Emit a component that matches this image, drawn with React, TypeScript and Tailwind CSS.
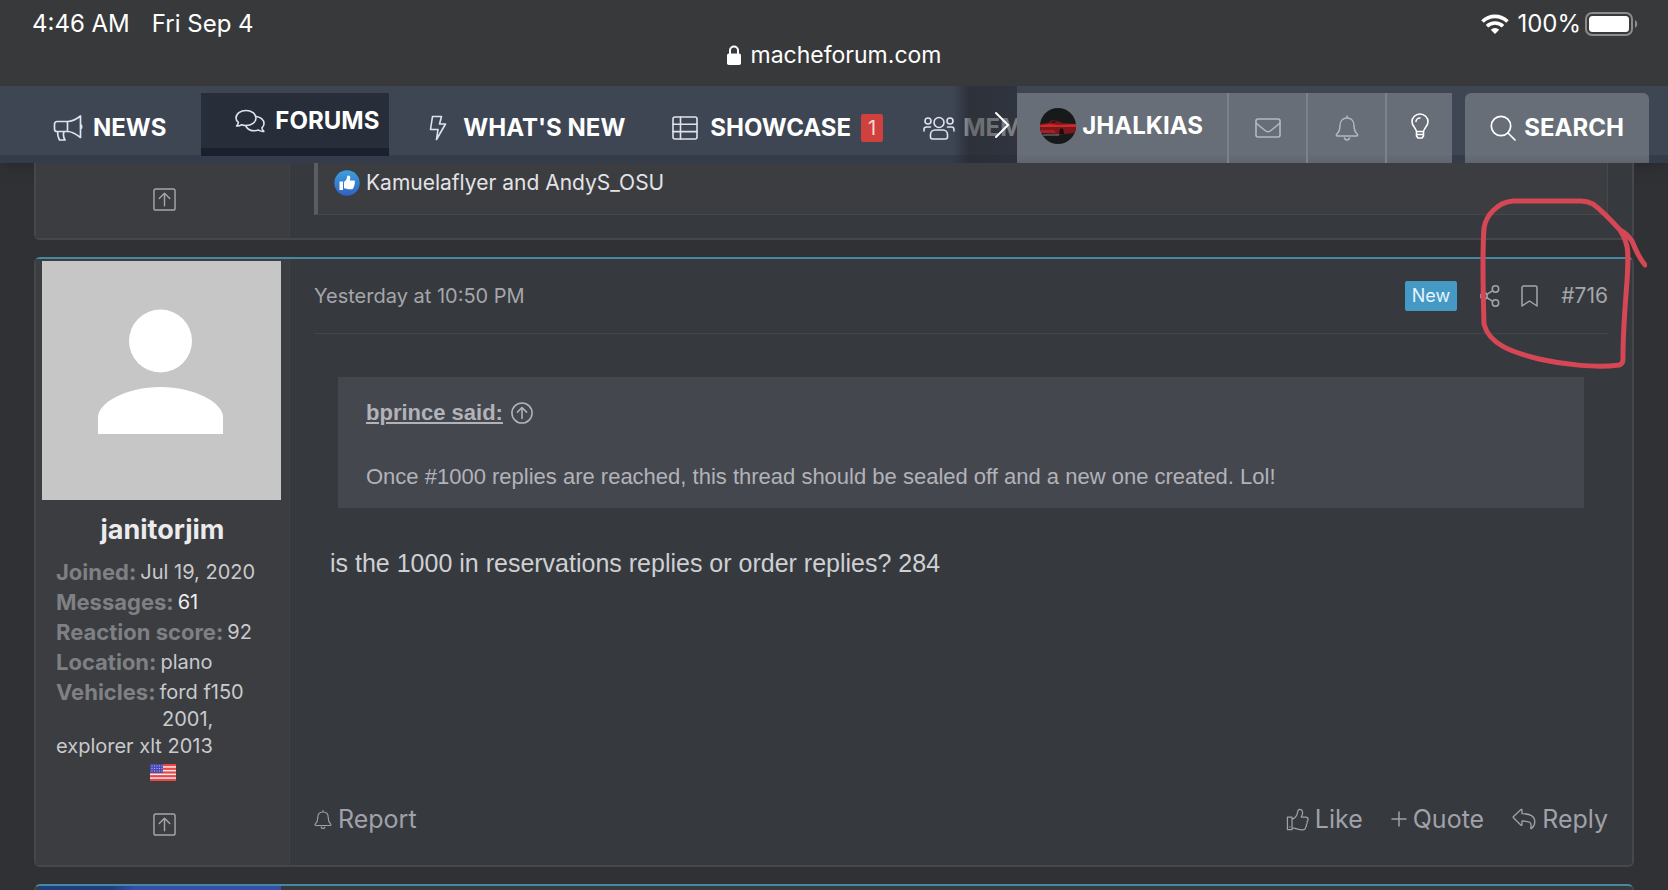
import type { ReactNode } from 'react';

type IconProps = { className?: string };

function Icon({ className, box = '0 0 24 24', sw = 1.5, children }: IconProps & { box?: string; sw?: number; children: ReactNode }) {
  return (
    <svg viewBox={box} className={className} fill="none" stroke="currentColor" strokeWidth={sw} strokeLinecap="round" strokeLinejoin="round" aria-hidden="true">
      {children}
    </svg>
  );
}

const Megaphone = (p: IconProps) => (
  <Icon {...p} box="0 0 30 26" sw={1.7}>
    <path d="M14.500 6.500H4A2.500 2.500 0 0 0 1.500 9v5A2.500 2.500 0 0 0 4 16.500h10.500M14.500 6.500c5 0 8.500-2 13-5.500v21.500c-4.500-3.500-8-6-13-6zM27.500 9.500c1.600 1 1.600 3.500 0 4.500M4.500 16.500c0 3 .7 6 2 8.500H12c-1.800-3-2-5.500-1-8.500M14.500 6.500v10" />
  </Icon>
);

const Comments = (p: IconProps) => (
  <Icon {...p} box="0 0 30 24" sw={1.6}>
    <path d="M11 1.500c5.500 0 10 3.300 10 7.500s-4.500 7.500-10 7.500c-1.500 0-3-.3-4.300-.8-1.500.9-3.400 1.500-5.200 1.300 1-1 1.700-2.200 1.900-3.600C1.900 12.300 1 10.800 1 9c0-4.200 4.500-7.500 10-7.500z" />
    <path d="M21.500 7.500c4.200.6 7.500 3.400 7.500 6.900 0 1.700-.8 3.200-2.100 4.400.2 1.400.9 2.600 1.900 3.600-1.800.2-3.700-.4-5.200-1.300-1.200.4-2.600.7-4 .7-3.800 0-7-1.600-8.500-4.300" />
  </Icon>
);

const Bolt = (p: IconProps) => (
  <Icon {...p} box="0 0 18 26" sw={1.6}>
    <path d="M3.500 1.500h9l-2 7.500h6L7.500 24.500l1.500-10H1.500z" />
  </Icon>
);

const TableIcon = (p: IconProps) => (
  <Icon {...p} box="0 0 26 24" sw={1.6}>
    <rect x="1" y="1" width="24" height="22" rx="2" />
    <path d="M1 8.300h24M1 15.600h24M8.500 1v22" />
  </Icon>
);

const Users = (p: IconProps) => (
  <Icon {...p} box="0 0 32 24" sw={1.6}>
    <circle cx="16" cy="6.500" r="5" />
    <circle cx="5" cy="5" r="3" />
    <circle cx="27" cy="5" r="3" />
    <path d="M12 14h8c2.500 0 4.500 2 4.500 4.500V21a2 2 0 0 1-2 2h-13a2 2 0 0 1-2-2v-2.500C7.500 16 9.500 14 12 14zM1 15v-1.500C1 12 2 11 3.500 11h4M31 15v-1.500c0-1.500-1-2.500-2.500-2.500h-4" />
  </Icon>
);

const Envelope = (p: IconProps) => (
  <Icon {...p} box="0 0 26 20" sw={1.6}>
    <rect x="1" y="1" width="24" height="18" rx="2" />
    <path d="M1 5l9 7.500c2 1.600 4 1.600 6 0L25 5" />
  </Icon>
);

const Bell = (p: IconProps) => (
  <Icon {...p} box="0 0 24 26">
    <path d="M12 1v2M12 3c-4.300 0-7 3.200-7 7.500 0 5-1.500 7-3.300 8.700-.8.800-.3 1.800.8 1.800h19c1.100 0 1.600-1 .8-1.800C20.500 17.500 19 15.500 19 10.500 19 6.200 16.300 3 12 3zM9.500 23c.3 1.200 1.300 2 2.500 2s2.200-.8 2.500-2" />
  </Icon>
);

const Bulb = (p: IconProps) => (
  <Icon {...p} box="0 0 18 26" sw={1.6}>
    <path d="M5.500 18.500C5 15 1 13 1 8.700 1 4.500 4.600 1 9 1s8 3.500 8 7.700c0 4.300-4 6.300-4.500 9.800zM5.500 18.500V23L7 25h4l1.500-2v-4.500M5.500 21.500h7M5 8.500C5 6.500 6.800 5 9 5" />
  </Icon>
);

const Search = (p: IconProps) => (
  <Icon {...p} box="0 0 26 26" sw={1.7}>
    <circle cx="11" cy="11" r="9.700" />
    <path d="M18 18l7 7" />
  </Icon>
);

const ArrowSquare = (p: IconProps) => (
  <Icon {...p}>
    <rect x="1" y="1" width="22" height="22" rx="2" />
    <path d="M12 18.500v-13M6.500 11L12 5.500l5.500 5.500" />
  </Icon>
);

const ArrowCircle = (p: IconProps) => (
  <Icon {...p} sw={1.7}>
    <circle cx="12" cy="12" r="11" />
    <path d="M12 18V6.500M7 11l5-5 5 5" />
  </Icon>
);

const Share = (p: IconProps) => (
  <Icon {...p} box="0 0 20 22">
    <circle cx="4" cy="11" r="3.200" />
    <circle cx="15.500" cy="4" r="3.200" />
    <circle cx="15.500" cy="18" r="3.200" />
    <path d="M6.800 9.300l6-3.600M6.800 12.700l6 3.600" />
  </Icon>
);

const Bookmark = (p: IconProps) => (
  <Icon {...p} box="0 0 17 22">
    <path d="M1 2.500C1 1.600 1.600 1 2.500 1h12c.9 0 1.500.6 1.500 1.500V21l-7.500-5L1 21z" />
  </Icon>
);

const ThumbsUp = (p: IconProps) => (
  <Icon {...p} sw={1.3}>
    <path d="M1.500 9.500h4.800v13H1.500zM4 19.500v.3M6.300 12c3.200-1.800 5-4 5.500-6.500.3-1.500.6-4 2.300-4 2 0 3.200 1.600 3.200 3.600 0 1.900-.9 3-1.300 4.400h4.500c1.500 0 2.500 1 2.500 2.300 0 1-.4 1.700-1 2.200.5 1.300.3 2.500-.7 3.300.2 1.200-.1 2.200-.9 2.900.1 1.700-1.300 2.500-3.200 2.500-5 0-6.500-1.800-10.900-1.900" />
  </Icon>
);

const ReplyArrow = (p: IconProps) => (
  <Icon {...p} box="0 0 24 22" sw={1.3}>
    <path d="M1.500 8.500L9 1.500c.5-.4 1-.2 1 .5v3.700c7 0 12.800 1.600 12.800 8 0 2.700-1.500 5.300-3.300 6.800-.5.400-1 0-.8-.6 1.700-5.700-1.700-6.900-8.700-6.900v3.700c0 .7-.6.900-1 .5L1.500 9.800c-.4-.4-.4-.9 0-1.300z" />
  </Icon>
);

function CarAvatar() {
  return (
    <svg viewBox="0 0 36 36" className="size-9 shrink-0 rounded-full" aria-hidden="true">
      <rect width="36" height="36" fill="#17191b" />
      <path d="M0 16l8-1 4-3 6 1 4 2 14 1v9l-12 1-5 1-4-1-15-1z" fill="#7d171b" />
      <path d="M0 17l11-1 7 1 18-1v3H0z" fill="#c92a2a" />
      <path d="M0 22h14l2 3H1z" fill="#a32226" />
      <path d="M11 15l2-2 4 1M20 21c2-2 4 0 4 5h-5z" fill="#1a0c0e" />
      <path d="M3 27h16" stroke="#7d8a84" strokeWidth="1.200" />
    </svg>
  );
}

function LikeBadge() {
  return (
    <svg viewBox="0 0 26 26" className="size-[26px] shrink-0" aria-hidden="true">
      <defs>
        <linearGradient id="like" x2="0" y2="1">
          <stop stopColor="#3f9fdc" />
          <stop offset="1" stopColor="#2f62c4" />
        </linearGradient>
      </defs>
      <circle cx="13" cy="13" r="12.700" fill="url(#like)" />
      <path d="M5.500 11.500H9V20H5.500zM10 12c2.200-1.500 3-3.300 3.300-6 .2-1 3-.8 3 1.700 0 1.200-.4 2-.6 2.800h4c1.500 0 1.700 1.600.8 2.300.6.800.4 1.700-.3 2.200.3.800.1 1.500-.6 2 .2 1.400-.5 2.200-2 2.200H14c-1.400 0-3-.4-4-.9z" fill="#fff" />
    </svg>
  );
}

function Flag() {
  return (
    <svg viewBox="0 0 26 17" className="h-[17px] w-[26px]" role="img" aria-label="United States">
      <rect width="26" height="17" rx="1" fill="#f1eef0" />
      {[0, 1, 2, 3, 4].map((i) => (
        <rect key={i} y={i * 3.7} width="26" height="2.200" fill="#ef4444" />
      ))}
      <rect width="13" height="9" fill="#4b4bb5" />
      <path d="M1.500 2h11M1.500 4.500h11M1.500 7h11" stroke="#b9b9ea" strokeWidth="1" strokeDasharray="1 1.500" />
    </svg>
  );
}

function StatusBar() {
  return (
    <header className="h-[86px] bg-[#38393b] text-2xl leading-7 text-white">
      <div className="flex items-center justify-between pt-[10px] pr-[29px] pl-8">
        <div className="flex gap-[22px]">
          <span>4:46 AM</span>
          <span>Fri Sep 4</span>
        </div>
        <div className="flex items-center gap-2">
          <svg viewBox="0 0 28 20" className="h-5 w-7" fill="none" stroke="currentColor" strokeWidth="3.600" aria-hidden="true">
            <path d="M1.500 7.500a17.800 17.800 0 0 1 25 0M6 12.300a11.500 11.500 0 0 1 16 0" />
            <path d="M14 20l-4.200-4.300a6 6 0 0 1 8.400 0z" fill="currentColor" stroke="none" />
          </svg>
          <span className="flex items-center gap-1">
            100%
            <svg viewBox="0 0 54 24" className="h-6 w-[54px]" aria-hidden="true">
              <rect x="1" y="1" width="46" height="22" rx="6" fill="none" stroke="#8b8c8e" strokeWidth="2" />
              <rect x="4" y="4" width="40" height="16" rx="3.500" fill="#fff" />
              <path d="M50 8c3 1.500 3 6.500 0 8z" fill="#8b8c8e" />
            </svg>
          </span>
        </div>
      </div>
      <div className="flex items-center justify-center gap-[10px] pt-[3px] text-[23px]">
        <svg viewBox="0 0 14 20" className="h-5 w-[14px]" aria-hidden="true">
          <rect y="8.500" width="14" height="11.500" rx="1.800" fill="#fff" />
          <path d="M3 9V5.500a4 4 0 0 1 8 0V9" fill="none" stroke="#fff" strokeWidth="2" />
        </svg>
        <span>macheforum.com</span>
      </div>
    </header>
  );
}

function NavBar() {
  return (
    <nav className="flex h-[77px] items-end border-b-8 border-[#343b4a] bg-[#3e4553] text-2xl leading-9 font-bold text-white shadow-lg">
      <div className="relative -mb-2 flex h-[77px] min-w-0 flex-1 items-start overflow-hidden pt-[7px] whitespace-nowrap">
        <a href="#news" className="flex h-[70px] shrink-0 items-center gap-[10px] pr-[35px] pl-[53px]">
          <Megaphone className="h-[26px] w-[30px] text-[#dfe3ee]" />
          NEWS
        </a>
        <a href="#forums" className="flex h-[63px] shrink-0 items-center gap-[10px] border-b-8 border-[#1b212c] bg-[#272d39] pr-[10px] pl-[34px]">
          <Comments className="h-6 w-[30px] text-[#dfe3ee]" />
          FORUMS
        </a>
        <a href="#whats-new" className="flex h-[70px] shrink-0 items-center gap-4 pl-10">
          <Bolt className="h-[26px] w-[18px] text-[#dfe3ee]" />
          WHAT&apos;S NEW
        </a>
        <a href="#showcase" className="flex h-[70px] shrink-0 items-center gap-3 pl-[47px]">
          <TableIcon className="h-6 w-[26px] text-[#dfe3ee]" />
          <span className="flex items-center gap-[10px]">
            SHOWCASE
            <span className="rounded-xs bg-[#d0403c] px-[7px] text-xl leading-7 font-normal text-[#f5d9d9]">1</span>
          </span>
        </a>
        <a href="#members" className="flex h-[70px] shrink-0 items-center gap-2 pl-10">
          <Users className="h-6 w-8 text-[#dfe3ee]" />
          MEMBERS
        </a>
        <button aria-label="Scroll menu" className="absolute inset-y-0 right-0 flex w-16 items-center justify-end bg-linear-to-r from-transparent via-[#252930]/70 via-25% to-[#252930]/60 pr-[7px]">
          <svg viewBox="0 0 16 28" className="h-7 w-4" fill="none" stroke="#fff" strokeWidth="2" strokeLinecap="round" aria-hidden="true">
            <path d="M2 2l12 12L2 26" />
          </svg>
        </button>
      </div>
      <div className="-mb-2 flex h-[70px] shrink-0 divide-x-2 divide-[#7c828b] bg-linear-to-b from-[#676e77] from-88% to-[#60646d]">
        <a href="#account" className="flex items-center gap-[6px] pr-6 pb-1 pl-[23px]">
          <CarAvatar />
          JHALKIAS
        </a>
        <button aria-label="Inbox" className="flex w-[79px] items-center justify-center text-[#b4b9c1]">
          <Envelope className="h-5 w-[26px]" />
        </button>
        <button aria-label="Alerts" className="flex w-[79px] items-center justify-center text-[#b4b9c1]">
          <Bell className="h-[26px] w-6" />
        </button>
        <button aria-label="Light mode" className="flex w-[65px] items-center justify-center pb-1">
          <Bulb className="h-[26px] w-[18px]" />
        </button>
      </div>
      <button className="mr-[19px] -mb-2 ml-[13px] flex h-[70px] w-[184px] shrink-0 items-center justify-center gap-2 rounded-t-md bg-linear-to-b from-[#676e77] from-88% to-[#60646d]">
        <Search className="size-[26px]" />
        SEARCH
      </button>
    </nav>
  );
}

function Detail({ label, children, bright }: { label: string; children: ReactNode; bright?: boolean }) {
  return (
    <div className="leading-[27px] not-last:mb-[3px]">
      <dt className="float-left mr-1 text-[22px] font-bold text-[#7f8084]">{label}:</dt>
      <dd className={bright ? 'text-[#ededf0]' : ''}>{children}</dd>
    </div>
  );
}

function UserPanel() {
  return (
    <aside className="w-[254px] shrink-0 border-r border-[#414246] bg-[#3b3d41]">
      <svg viewBox="0 0 239 239" className="mt-[2px] ml-[6px] size-[239px]" role="img" aria-label="Default avatar">
        <rect width="239" height="239" fill="#c6c6c6" />
        <circle cx="118.500" cy="80" r="31.500" fill="#fff" />
        <path d="M56 173v-17c0-14 28-30 62.500-30s62.500 16 62.500 30v17z" fill="#fff" />
      </svg>
      <h2 className="mt-3 text-center text-[27px] leading-9 font-bold text-[#ebebee]">
        <a href="#janitorjim">janitorjim</a>
      </h2>
      <dl className="mt-[11px] pr-2 pl-5 text-xl text-[#c9cacd]">
        <Detail label="Joined">Jul 19, 2020</Detail>
        <Detail label="Messages" bright>61</Detail>
        <Detail label="Reaction score">92</Detail>
        <Detail label="Location">plano</Detail>
        <Detail label="Vehicles">
          ford f150
          <br />
          <span className="ml-[106px]">2001,</span>
          <br />
          explorer xlt 2013
        </Detail>
      </dl>
      <div className="mt-1 flex justify-center">
        <Flag />
      </div>
      <a href="#top" aria-label="Back to top" className="mt-8 flex justify-center pl-1 text-[#a5a6aa]">
        <ArrowSquare className="size-[23px]" />
      </a>
    </aside>
  );
}

function Scribble() {
  return (
    <svg viewBox="0 0 170 172" className="pointer-events-none absolute -top-[61px] -right-[15px] z-10 w-[170px]" fill="none" stroke="#d54755" strokeWidth="5" strokeLinecap="round" strokeLinejoin="round" aria-hidden="true">
      <path d="M168 67c-5-6-9-14-13-24-4-6-8-9-12-11-10-11-19-20-27-26-4-2-7-3-12-3H36C21 4 9 17 7 30c-2 28-1 60 0 96 5 20 27 28 55 35 26 6 58 9 80 6 4-1 4-4 4-8 0-28 2-48 4-76 1-16 2-31-1-38-1-4-3-8-6-13" />
    </svg>
  );
}

function Post() {
  return (
    <article className="relative mt-[17px] flex h-[610px] rounded-md border-2 border-[#46474b] border-t-[#4787a2] bg-[#36393e]">
      <UserPanel />
      <div className="flex min-w-0 flex-1 flex-col px-6">
        <div className="flex h-[75px] items-center justify-between border-b border-[#44454a] text-xl text-[#a5a6ab]">
          <a href="#post-716">Yesterday at 10:50 PM</a>
          <div className="flex items-center">
            <span className="rounded-xs bg-[#4499c5] px-[7px] text-lg leading-[30px] text-[#e6f4fb]">New</span>
            <button aria-label="Share" className="ml-[23px]">
              <Share className="h-[22px] w-5" />
            </button>
            <button aria-label="Add bookmark" className="ml-[21px]">
              <Bookmark className="h-[22px] w-[17px]" />
            </button>
            <a href="#post-716" className="ml-[23px] text-[21px]">#716</a>
          </div>
        </div>
        <blockquote className="mx-6 mt-[43px] h-[131px] bg-[#45474f] px-7 pt-[22px] font-['Liberation_Sans',Arial,sans-serif] text-[22px] leading-7 text-[#b2b3b8]">
          <a href="#quoted" className="flex items-center gap-2 font-bold">
            <span className="underline">bprince said:</span>
            <ArrowCircle className="size-[22px]" />
          </a>
          <p className="mt-9">Once #1000 replies are reached, this thread should be sealed off and a new one created. Lol!</p>
        </blockquote>
        <p className="mt-[37px] px-4 font-['Liberation_Sans',Arial,sans-serif] text-[25px] leading-9 text-[#cfd0d3]">
          is the 1000 in reservations replies or order replies? 284
        </p>
        <div className="mt-auto mb-7 flex items-center justify-between text-[25px] leading-9 text-[#a0a1a9]">
          <button className="flex items-center gap-[6px]">
            <Bell className="h-[21px] w-[18px]" />
            Report
          </button>
          <div className="flex gap-7">
            <button className="flex items-center gap-[6px]">
              <ThumbsUp className="size-[23px]" />
              Like
            </button>
            <button className="flex items-center gap-[6px]">
              <Icon box="0 0 16 16" className="size-4">
                <path d="M8 1v14M1 8h14" />
              </Icon>
              Quote
            </button>
            <button className="flex items-center gap-[6px]">
              <ReplyArrow className="h-[22px] w-6" />
              Reply
            </button>
          </div>
        </div>
      </div>
      <Scribble />
    </article>
  );
}

export default function App() {
  return (
    <div className="min-h-screen overflow-hidden bg-[#303135] font-['Inter',sans-serif]">
      <StatusBar />
      <NavBar />
      <main className="px-[34px]">
        <section className="flex h-[77px] rounded-b-md border-2 border-t-0 border-[#46474b] bg-[#36393e]">
          <div className="flex w-[254px] shrink-0 justify-center border-r border-[#414246] bg-[#3b3d41] pt-[25px] pl-1">
            <a href="#top" aria-label="Back to top" className="text-[#a5a6aa]">
              <ArrowSquare className="size-[23px]" />
            </a>
          </div>
          <div className="mx-6 flex h-[52px] flex-1 items-center gap-[6px] border-r border-b border-l-4 border-[#46474b] border-l-[#5b5d66] bg-[#3b3d40] pb-3 pl-4 text-[21px] text-[#e3e3e6]">
            <LikeBadge />
            <a href="#reactions">Kamuelaflyer and AndyS_OSU</a>
          </div>
        </section>
        <Post />
        <article className="mt-[17px] h-[6px] overflow-hidden rounded-t-md border-2 border-b-0 border-[#46474b] border-t-[#4787a2] bg-[#36393e]">
          <div className="ml-[3px] h-1 w-[242px] bg-linear-to-r from-[#1c3f7c] from-30% to-[#3450a8] to-40%" />
        </article>
      </main>
    </div>
  );
}
